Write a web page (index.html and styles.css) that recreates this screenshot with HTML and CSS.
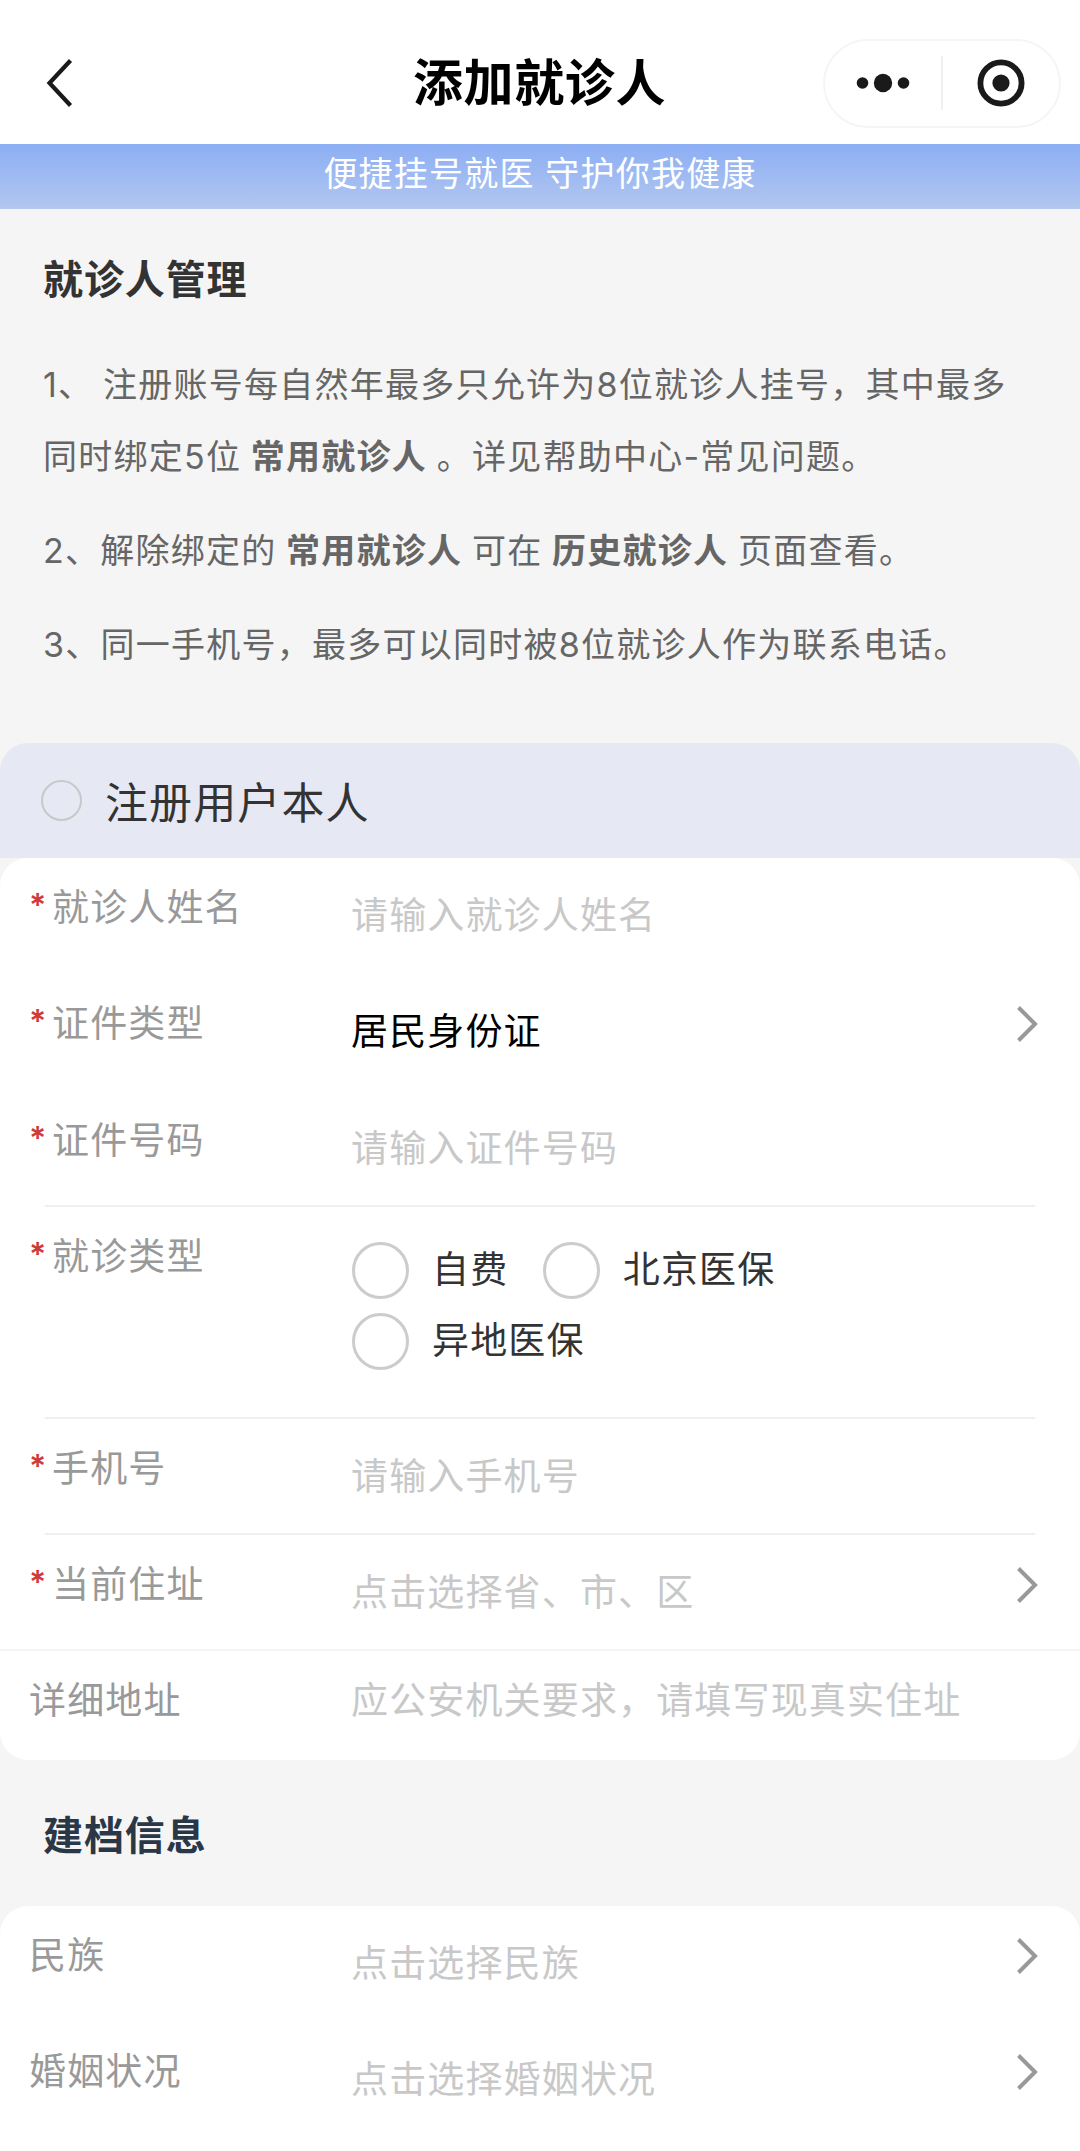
FILE: index.html
```html
<!DOCTYPE html>
<html lang="zh-CN">
<head>
    <meta charset="UTF-8">
    <meta name="viewport" content="width=device-width, initial-scale=1.0">
    <title>添加就诊人</title>
    <link rel="stylesheet" href="styles.css">
</head>
<body>

    <header class="navbar">
        <svg class="back" width="27" height="50" viewBox="0 0 27 50">
            <path d="M24.5 2.5 L3.5 25 L24.5 47.5" fill="none" stroke="#1a1a1a" stroke-width="4.2"/>
        </svg>
        <h1>添加就诊人</h1>
        <div class="capsule">
            <svg class="dots" width="54" height="20" viewBox="0 0 54 20">
                <circle cx="6.5" cy="10" r="5.8"/>
                <circle cx="27" cy="10" r="9.2"/>
                <circle cx="47.5" cy="10" r="5.8"/>
            </svg>
            <span class="capsule-line"></span>
            <svg class="target" width="48" height="48" viewBox="0 0 48 48">
                <circle cx="24" cy="24" r="20.6" fill="none" stroke="#1a1a1a" stroke-width="5.8"/>
                <circle cx="24" cy="24" r="8.6"/>
            </svg>
        </div>
    </header>

    <div class="banner">便捷挂号就医 守护你我健康</div>

    <section class="notice">
        <h2>就诊人管理</h2>
        <p>1、 注册账号每自然年最多只允许为8位就诊人挂号，其中最多<br>同时绑定5位 <b>常用就诊人</b> 。详见帮助中心-常见问题。</p>
        <p>2、解除绑定的 <b>常用就诊人</b> 可在 <b>历史就诊人</b> 页面查看。</p>
        <p>3、同一手机号，最多可以同时被8位就诊人作为联系电话。</p>
    </section>

    <div class="self">
        <span class="self-radio"></span>
        <span class="self-text">注册用户本人</span>
    </div>

    <section class="card">
        <div class="row">
            <div class="label"><i>*</i>就诊人姓名</div>
            <div class="value">请输入就诊人姓名</div>
        </div>
        <div class="row">
            <div class="label"><i>*</i>证件类型</div>
            <div class="value filled">居民身份证</div>
            <svg class="arrow" width="24" height="40" viewBox="0 0 24 40"><path d="M3.5 3.5 L20 20 L3.5 36.5"/></svg>
        </div>
        <div class="row">
            <div class="label"><i>*</i>证件号码</div>
            <div class="value">请输入证件号码</div>
        </div>
        <hr>
        <div class="row row-radio">
            <div class="label"><i>*</i>就诊类型</div>
            <div class="radios">
                <label><span class="radio"></span>自费</label>
                <label><span class="radio"></span>北京医保</label>
                <label><span class="radio"></span>异地医保</label>
            </div>
        </div>
        <hr>
        <div class="row">
            <div class="label"><i>*</i>手机号</div>
            <div class="value">请输入手机号</div>
        </div>
        <hr>
        <div class="row">
            <div class="label"><i>*</i>当前住址</div>
            <div class="value">点击选择省、市、区</div>
            <svg class="arrow" width="24" height="40" viewBox="0 0 24 40"><path d="M3.5 3.5 L20 20 L3.5 36.5"/></svg>
        </div>
        <hr class="full">
        <div class="row row-detail">
            <div class="label">详细地址</div>
            <div class="value">应公安机关要求，请填写现真实住址</div>
        </div>
    </section>

    <h2 class="group-title">建档信息</h2>

    <section class="card card-last">
        <div class="row">
            <div class="label">民族</div>
            <div class="value">点击选择民族</div>
            <svg class="arrow" width="24" height="40" viewBox="0 0 24 40"><path d="M3.5 3.5 L20 20 L3.5 36.5"/></svg>
        </div>
        <div class="row">
            <div class="label">婚姻状况</div>
            <div class="value">点击选择婚姻状况</div>
            <svg class="arrow" width="24" height="40" viewBox="0 0 24 40"><path d="M3.5 3.5 L20 20 L3.5 36.5"/></svg>
        </div>
    </section>

</body>
</html>
```

FILE: styles.css
```css
* {
    box-sizing: border-box;
    margin: 0;
    padding: 0;
}

body {
    width: 1080px;
    height: 2151px;
    font-family: 'Inter', 'Noto Sans CJK SC', sans-serif;
    background: #f5f5f5;
    color: #333;
    overflow: hidden;
}

/* top bar */
.navbar {
    display: grid;
    grid-template-columns: 1fr auto 1fr;
    align-items: center;
    height: 144px;
    padding: 22px 19px 0 46px;
    background: #fff;
}

.navbar h1 {
    font-size: 50px;
    line-height: 60px;
    font-weight: 700;
    letter-spacing: 0.6px;
    margin-left: -14px;
    margin-right: 14px;
    color: #000;
}

.capsule {
    display: flex;
    align-items: center;
    justify-self: end;
    width: 238px;
    height: 89px;
    padding-left: 31px;
    border: 2px solid #f5f5f5;
    border-radius: 45px;
}

.capsule-line {
    width: 2px;
    height: 54px;
    margin: 0 34px 0 31px;
    background: #f0f0f0;
}

.dots,
.target {
    fill: #1a1a1a;
}

.banner {
    height: 65px;
    line-height: 59px;
    text-align: center;
    font-size: 34px;
    letter-spacing: 1.2px;
    color: #fff;
    background: linear-gradient(#8caef4, #b2c7f0);
}

/* notes */
.notice {
    height: 534px;
    padding: 41px 40px 0 43px;
}

.notice h2,
.group-title {
    font-size: 40px;
    line-height: 60px;
    font-weight: 700;
    letter-spacing: 0.9px;
}

.notice h2 {
    margin-bottom: 39px;
}

.notice p {
    margin-bottom: 22px;
    font-size: 34px;
    line-height: 72px;
    letter-spacing: 1.25px;
    word-spacing: -1.2px;
    white-space: nowrap;
    color: #666;
}

.self {
    display: flex;
    align-items: center;
    gap: 23px;
    height: 115px;
    padding-left: 41px;
    font-size: 43px;
    letter-spacing: 1.1px;
    background: #e6e8f4;
    border-radius: 28px 28px 0 0;
}

.self-radio {
    width: 41px;
    height: 41px;
    border: 2px solid #c8c8c8;
    border-radius: 50%;
}

.self-text {
    margin-bottom: 1px;
}

/* form */
.card {
    height: 902px;
    background: #fff;
    border-radius: 28px;
}

.card-last {
    height: 245px;
    border-radius: 28px 28px 0 0;
}

.row {
    display: flex;
    height: 116.3px;
    padding: 20px 41px 0 29px;
    font-size: 37px;
    line-height: 60px;
    letter-spacing: 1.15px;
}

.card hr {
    height: 2px;
    margin: -2px 45px 0;
    border: none;
    background: #efefef;
}

.card hr.full {
    margin: -2px 0 0;
    background: #f4f4f4;
}

.label {
    width: 322px;
    color: #999;
}

.label i {
    display: inline-block;
    width: 23px;
    font-size: 32px;
    line-height: 32px;
    font-style: normal;
    font-weight: 600;
    letter-spacing: 0;
    vertical-align: 4px;
    color: #d03a3a;
}

.value {
    flex: 1;
    margin-top: 8px;
    height: 60px;
    white-space: nowrap;
    color: #c8c8c8;
}

.filled {
    color: #000;
}

.arrow {
    margin-top: 10px;
    fill: none;
    stroke: #999;
    stroke-width: 4;
}

.row-radio {
    height: 212px;
}

.radios {
    display: flex;
    flex-wrap: wrap;
    align-content: flex-start;
    gap: 14px 34.5px;
    width: 500px;
    margin-top: 15px;
    margin-left: 1px;
    line-height: 55px;
}

.radios label {
    display: flex;
    align-items: flex-start;
    height: 57px;
    gap: 23px;
}

.radio {
    width: 57px;
    height: 57px;
    border: 3px solid #ccc;
    border-radius: 50%;
}

.row-detail {
    height: 109px;
}

.row-detail .value {
    margin-top: 0;
}

.group-title {
    height: 146px;
    padding: 46px 0 0 43px;
    color: #2a3746;
}
```
